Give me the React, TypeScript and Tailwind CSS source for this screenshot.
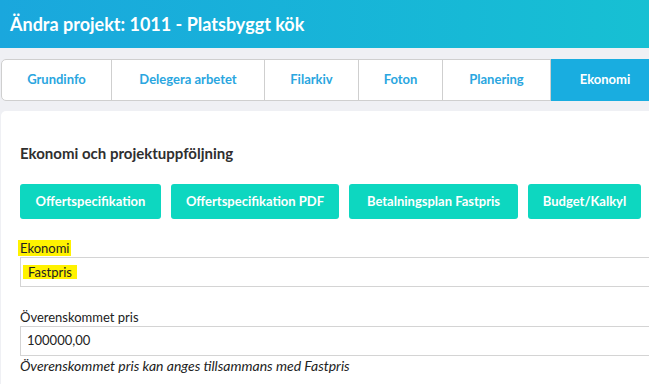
const tabs = [
  { label: "Grundinfo", w: "w-[110px]" },
  { label: "Delegera arbetet", w: "w-[153px]" },
  { label: "Filarkiv", w: "w-[94px]" },
  { label: "Foton", w: "w-[84px]" },
  { label: "Planering", w: "w-[108px]" },
];

const buttons = [
  { label: "Offertspecifikation", w: "w-[141px]" },
  { label: "Offertspecifikation PDF", w: "w-[168px]" },
  { label: "Betalningsplan Fastpris", w: "w-[169px]" },
  { label: "Budget/Kalkyl", w: "w-[113px]" },
];

export default function App() {
  return (
    <div
      className="w-[649px] h-[384px] overflow-hidden bg-[#eff0f4]"
      style={{ fontFamily: "Lato, 'Open Sans', sans-serif" }}
    >
      {/* Header */}
      <div className="h-12 flex items-center px-[10px] bg-gradient-to-r from-[#1aa7dd] to-[#17c0d3]">
        <h1 className="text-white text-[18px] font-bold">
          Ändra projekt: 1011 - Platsbyggt kök
        </h1>
      </div>

      {/* Tabs */}
      <div className="pt-[11px] pl-px">
        <div className="flex w-[700px] h-[42px] bg-white border border-[#cfcfcf] rounded-l-[5px]">
          {tabs.map((t) => (
            <div
              key={t.label}
              className={`${t.w} shrink-0 flex items-center justify-center border-r border-[#cfcfcf] text-[13px] font-bold text-[#2aa6e0]`}
            >
              {t.label}
            </div>
          ))}
          <div className="w-[108px] shrink-0 -my-px flex items-center justify-center bg-[#19ade0] text-white text-[13px] font-bold">
            Ekonomi
          </div>
        </div>
      </div>

      {/* Panel */}
      <div className="mt-[10px] ml-px w-[700px] h-[300px] bg-white rounded-tl-[5px] pl-[19px] pt-[32px]">
        <h2 className="text-[15px] font-bold text-[#2f2f2f] leading-[20px]">
          Ekonomi och projektuppföljning
        </h2>

        <div className="flex gap-[10px] mt-[21px]">
          {buttons.map((b) => (
            <div
              key={b.label}
              className={`${b.w} h-[35px] shrink-0 flex items-center justify-center rounded-[3px] bg-[#0dd7c0] text-white text-[13px] font-bold`}
            >
              {b.label}
            </div>
          ))}
        </div>

        <div className="mt-[21px] text-[13px] text-[#222] leading-[16px]">
          <span className="bg-[#fff200] -ml-[2px] pl-[2px] pr-px">Ekonomi</span>
        </div>
        <div className="mt-px h-[30px] w-[680px] border border-[#d4d4d4] flex items-center pl-[2px] text-[13px] text-[#222]">
          <span className="bg-[#fff200] px-[5px] leading-[14px]">Fastpris</span>
        </div>

        <div className="mt-[22px] text-[13px] text-[#222] leading-[16px]">
          Överenskommet pris
        </div>
        <div className="mt-[1px] h-[30px] w-[680px] border border-[#d4d4d4] flex items-center pl-[6px] text-[13px] text-[#222]">
          100000,00
        </div>
        <div className="mt-px text-[14px] italic text-[#222] leading-[17px]">
          Överenskommet pris kan anges tillsammans med Fastpris
        </div>
      </div>
    </div>
  );
}
